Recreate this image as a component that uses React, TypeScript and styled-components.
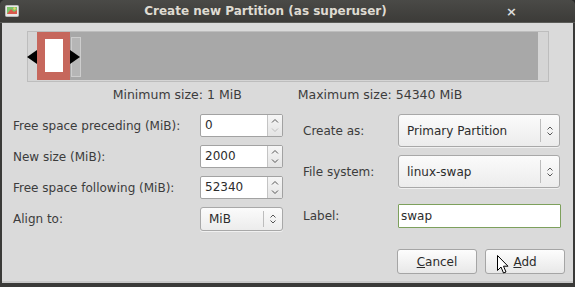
import styled, { createGlobalStyle } from 'styled-components';

const GlobalStyle = createGlobalStyle`
  html, body {
    margin: 0;
    padding: 0;
    background: #2b2b2b;
  }
  body {
    font-family: 'DejaVu Sans', 'Liberation Sans', sans-serif;
    font-size: 12px;
    color: #3c3c3c;
  }
`;

// ---------------------------------------------
// window chrome
// ---------------------------------------------
const Window = styled.div`
  width: 575px;
  height: 287px;
  display: flex;
  flex-direction: column;
  background: #3a3a38;
  border-radius: 5px 5px 0 0;
  overflow: hidden;
`;

const TitleBar = styled.div`
  height: 23px;
  flex: none;
  display: grid;
  grid-template-columns: 40px 1fr 40px;
  align-items: center;
  background: linear-gradient(#4a4a47, #3c3b38);
  border-bottom: 1px solid #5b5b58;
  box-sizing: border-box;
`;

const TitleText = styled.div`
  text-align: center;
  padding-right: 44px;
  font-weight: bold;
  font-size: 12px;
  color: #dfdbd2;
`;

const TitleIcon = styled.div`
  padding-left: 5px;
  display: flex;
`;

const CloseGlyph = styled.div`
  justify-self: end;
  padding-right: 58px;
  font-weight: bold;
  font-size: 13px;
  color: #dcdcdc;
`;

const Body = styled.div`
  flex: 1;
  margin: 0 2px 4px 2px;
  background: #dadada;
  display: flex;
  flex-direction: column;
  position: relative;
  border-bottom: 2px solid #c8c8c8;
`;

// ---------------------------------------------
// partition bar
// ---------------------------------------------
const BarFrame = styled.div`
  margin: 8px 0 0 25px;
  width: 522px;
  height: 51px;
  box-sizing: border-box;
  border: 1px solid #bdbdbd;
  background: #d5d5d5;
  display: flex;
  padding: 0 10px 1px 9px;
  position: relative;
`;

const FreeSpace = styled.div`
  flex: 1;
  background: #a8a8a8;
  display: flex;
`;

const Partition = styled.div`
  width: 33px;
  background: #c6675c;
  display: flex;
  align-items: center;
  justify-content: center;
  padding-bottom: 2px;
`;

const PartitionInner = styled.div`
  width: 18px;
  height: 33px;
  background: #ffffff;
`;

const Ghost = styled.div`
  position: absolute;
  left: 43px;
  top: 5px;
  width: 8px;
  height: 38px;
  border: 1px solid #cdcdcd;
  background: #b6b6b6;
`;

const Arrow = styled.svg<{ $left: number }>`
  position: absolute;
  top: 18px;
  left: ${({ $left }) => $left}px;
`;

const SizeRow = styled.div`
  display: flex;
  justify-content: center;
  gap: 56px;
  margin-top: 5px;
  line-height: 16px;
  font-size: 12.5px;
`;

// ---------------------------------------------
// form
// ---------------------------------------------
const Form = styled.div`
  display: flex;
  margin-top: 11px;
`;

const Column = styled.div<{ $width: number; $pad: number }>`
  width: ${({ $width }) => $width}px;
  padding-left: ${({ $pad }) => $pad}px;
  box-sizing: border-box;
  display: flex;
  flex-direction: column;
`;

const Row = styled.div<{ $labelWidth: number; $gap?: number }>`
  display: grid;
  grid-template-columns: ${({ $labelWidth }) => $labelWidth}px 1fr;
  align-items: center;
  margin-bottom: ${({ $gap }) => $gap ?? 8}px;
`;

const Spin = styled.div`
  width: 83px;
  height: 23px;
  box-sizing: border-box;
  display: flex;
  border: 1px solid #a2a2a2;
  border-radius: 2px;
  background: #ffffff;
  overflow: hidden;
`;

const SpinText = styled.div`
  flex: 1;
  padding-left: 4px;
  line-height: 21px;
  color: #2c2c2c;
`;

const SpinButtons = styled.div`
  width: 14px;
  border-left: 1px solid #c4c4c4;
  background: linear-gradient(#f6f6f6, #e4e4e4);
  display: flex;
  flex-direction: column;
  align-items: center;
  justify-content: space-around;
`;

const Combo = styled.div<{ $width: number; $height: number }>`
  width: ${({ $width }) => $width}px;
  height: ${({ $height }) => $height}px;
  box-sizing: border-box;
  border: 1px solid #a8a8a8;
  border-radius: 3px;
  background: linear-gradient(#fbfbfb, #ececec);
  display: flex;
  align-items: center;
  color: #2c2c2c;
  box-shadow: 0 1px 0 rgba(255, 255, 255, 0.6);
`;

const ComboText = styled.div`
  flex: 1;
  padding-left: 8px;
`;

const ComboArrows = styled.div<{ $height: number }>`
  width: 18px;
  height: ${({ $height }) => $height}px;
  border-left: 1px solid #bdbdbd;
  display: flex;
  align-items: center;
  justify-content: center;
`;

const Entry = styled.div`
  width: 163px;
  height: 24px;
  box-sizing: border-box;
  border: 1px solid #7da05c;
  border-radius: 1px;
  background: #ffffff;
  padding-left: 2px;
  line-height: 22px;
  color: #2c2c2c;
`;

// ---------------------------------------------
// buttons
// ---------------------------------------------
const ButtonRow = styled.div`
  display: flex;
  justify-content: flex-end;
  gap: 8px;
  padding-right: 8px;
  margin-top: 18px;
`;

const Button = styled.div`
  width: 80px;
  height: 25px;
  box-sizing: border-box;
  border: 1px solid #a5a5a5;
  border-radius: 3px;
  background: linear-gradient(#fdfdfd, #e8e8e8);
  display: flex;
  align-items: center;
  justify-content: center;
  color: #2c2c2c;

  u {
    text-decoration: underline;
  }
`;

const Cursor = styled.svg`
  position: absolute;
  left: 495px;
  top: 232px;
`;

function Chevrons() {
  return (
    <svg width="8" height="12" viewBox="0 0 8 12">
      <path d="M1.5 4.5 L4 2 L6.5 4.5" fill="none" stroke="#555" strokeWidth="1" />
      <path d="M1.5 7.5 L4 10 L6.5 7.5" fill="none" stroke="#555" strokeWidth="1" />
    </svg>
  );
}

function SpinButton({ value, min }: { value: string; min?: boolean }) {
  return (
    <Spin>
      <SpinText>{value}</SpinText>
      <SpinButtons>
        <svg width="8" height="5" viewBox="0 0 8 5">
          <path d="M1 4.5 L4 1.5 L7 4.5" fill="none" stroke="#555" strokeWidth="1" />
        </svg>
        <svg width="8" height="5" viewBox="0 0 8 5">
          <path
            d="M1 0.5 L4 3.5 L7 0.5"
            fill="none"
            stroke={min ? '#bdbdbd' : '#555'}
            strokeWidth="1"
          />
        </svg>
      </SpinButtons>
    </Spin>
  );
}

export default function App() {
  return (
    <>
      <GlobalStyle />
      <Window>
        <TitleBar>
          <TitleIcon>
            <svg width="14" height="12" viewBox="0 0 14 12">
              <rect x="0.5" y="0.5" width="13" height="11" rx="1" fill="#e8e8e8" stroke="#bbb" />
              <rect x="2" y="2" width="10" height="7" fill="#7bc36a" />
              <path d="M2 9 L6 4 L9 7 L12 5 L12 9 Z" fill="#d9594c" />
              <circle cx="9.5" cy="3.5" r="1.2" fill="#f2d36b" />
            </svg>
          </TitleIcon>
          <TitleText>Create new Partition (as superuser)</TitleText>
          <CloseGlyph>×</CloseGlyph>
        </TitleBar>

        <Body>
          <BarFrame>
            <Partition>
              <PartitionInner />
            </Partition>
            <FreeSpace />
            <Ghost />
            <Arrow $left={-1} width="10" height="14" viewBox="0 0 10 14">
              <path d="M0 7 L10 0 L10 14 Z" fill="#000" />
            </Arrow>
            <Arrow $left={42} width="10" height="14" viewBox="0 0 10 14">
              <path d="M10 7 L0 0 L0 14 Z" fill="#000" />
            </Arrow>
          </BarFrame>

          <SizeRow>
            <span>Minimum size: 1 MiB</span>
            <span>Maximum size: 54340 MiB</span>
          </SizeRow>

          <Form>
            <Column $width={288} $pad={11}>
              <Row $labelWidth={187}>
                <span>Free space preceding (MiB):</span>
                <SpinButton value="0" min />
              </Row>
              <Row $labelWidth={187}>
                <span>New size (MiB):</span>
                <SpinButton value="2000" />
              </Row>
              <Row $labelWidth={187}>
                <span>Free space following (MiB):</span>
                <SpinButton value="52340" />
              </Row>
              <Row $labelWidth={187} $gap={0}>
                <span>Align to:</span>
                <Combo $width={83} $height={24}>
                  <ComboText>MiB</ComboText>
                  <ComboArrows $height={16}>
                    <Chevrons />
                  </ComboArrows>
                </Combo>
              </Row>
            </Column>

            <Column $width={283} $pad={13}>
              <Row $labelWidth={95}>
                <span>Create as:</span>
                <Combo $width={162} $height={33}>
                  <ComboText>Primary Partition</ComboText>
                  <ComboArrows $height={23}>
                    <Chevrons />
                  </ComboArrows>
                </Combo>
              </Row>
              <Row $labelWidth={95} $gap={16}>
                <span>File system:</span>
                <Combo $width={162} $height={33}>
                  <ComboText>linux-swap</ComboText>
                  <ComboArrows $height={23}>
                    <Chevrons />
                  </ComboArrows>
                </Combo>
              </Row>
              <Row $labelWidth={95} $gap={0}>
                <span>Label:</span>
                <Entry>swap</Entry>
              </Row>
            </Column>
          </Form>

          <ButtonRow>
            <Button>
              <span>
                <u>C</u>ancel
              </span>
            </Button>
            <Button>
              <span>
                <u>A</u>dd
              </span>
            </Button>
          </ButtonRow>

          <Cursor width="12" height="19" viewBox="0 0 12 19">
            <path
              d="M0.5 0.5 L0.5 15.5 L4 12 L6.5 18 L9 17 L6.5 11.2 L11 11.2 Z"
              fill="#fff"
              stroke="#000"
              strokeWidth="1"
            />
          </Cursor>
        </Body>
      </Window>
    </>
  );
}
